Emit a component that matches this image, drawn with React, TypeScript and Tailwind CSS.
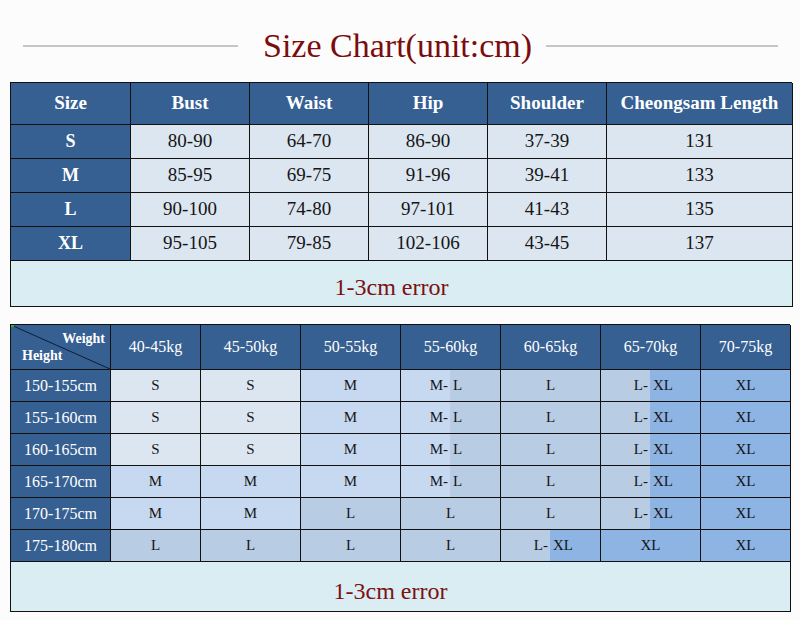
const measures = [
  { size: "S", values: ["80-90", "64-70", "86-90", "37-39", "131"] },
  { size: "M", values: ["85-95", "69-75", "91-96", "39-41", "133"] },
  { size: "L", values: ["90-100", "74-80", "97-101", "41-43", "135"] },
  { size: "XL", values: ["95-105", "79-85", "102-106", "43-45", "137"] },
];

const weights = ["40-45kg", "45-50kg", "50-55kg", "55-60kg", "60-65kg", "65-70kg", "70-75kg"];

const fits = [
  { height: "150-155cm", sizes: ["S", "S", "M", "M-L", "L", "L-XL", "XL"] },
  { height: "155-160cm", sizes: ["S", "S", "M", "M-L", "L", "L-XL", "XL"] },
  { height: "160-165cm", sizes: ["S", "S", "M", "M-L", "L", "L-XL", "XL"] },
  { height: "165-170cm", sizes: ["M", "M", "M", "M-L", "L", "L-XL", "XL"] },
  { height: "170-175cm", sizes: ["M", "M", "L", "L", "L", "L-XL", "XL"] },
  { height: "175-180cm", sizes: ["L", "L", "L", "L", "L-XL", "XL", "XL"] },
];

const tone: Record<string, string> = {
  S: "bg-[#dce6f1]",
  M: "bg-[#c6d9f1]",
  L: "bg-[#b8cce4]",
  XL: "bg-[#8db4e2]",
};

export default function App() {
  return (
    <main className="min-h-screen w-[800px] bg-[#fdfcfd] font-['Liberation_Serif',serif]">
      <div className="flex items-center pl-[23px] pt-[27px]">
        <div className="h-[2px] w-[215px] bg-[#c6c6c6]" />
        <h1 className="ml-[25px] h-[38px] text-[34px] leading-[38px] text-[#7b0c0c]">Size Chart(unit:cm)</h1>
        <div className="ml-[14px] h-[2px] w-[232px] bg-[#c6c6c6]" />
      </div>

      {/* measurements */}
      <div className="ml-[10px] mt-[17px] grid w-[782px] grid-cols-[120px_119px_119px_119px_119px_186px] border-l border-t border-[#111]">
        {["Size", "Bust", "Waist", "Hip", "Shoulder", "Cheongsam Length"].map((label) => (
          <div
            key={label}
            className="flex h-[42px] items-center justify-center border-b border-r border-[#111] bg-[#366092] text-[19px] font-bold text-white"
          >
            {label}
          </div>
        ))}
        {measures.map((row) => (
          <Row key={row.size} size={row.size} values={row.values} />
        ))}
        <div className="col-span-6 flex h-[46px] items-center justify-center border-b border-r border-[#111] bg-[#daedf2] pr-[20px] pt-[6px] text-[24px] text-[#7b1113]">
          1-3cm error
        </div>
      </div>

      {/* height / weight */}
      <div className="ml-[10px] mt-[17px] grid w-[780px] grid-cols-[100px_90px_100px_100px_100px_100px_100px_90px] border-l border-t border-[#111]">
        <div className="relative h-[45px] border-b border-r border-[#111] bg-[#366092] text-[14px] font-bold text-white">
          <svg className="absolute inset-0" width="100%" height="100%" viewBox="0 0 99 44" preserveAspectRatio="none">
            <line x1="0" y1="0" x2="99" y2="44" stroke="#0f1c33" strokeWidth="1" />
            <rect x="0" y="0" width="3" height="2" fill="#3aa845" />
          </svg>
          <span className="absolute right-[5px] top-[3px]">Weight</span>
          <span className="absolute bottom-[3px] left-[11px]">Height</span>
        </div>
        {weights.map((w) => (
          <div
            key={w}
            className="flex h-[45px] items-center justify-center border-b border-r border-[#111] bg-[#366092] text-[16px] text-white"
          >
            {w}
          </div>
        ))}
        {fits.map((row) => (
          <FitRow key={row.height} height={row.height} sizes={row.sizes} />
        ))}
        <div className="col-span-8 flex h-[50px] items-center justify-center border-b border-r border-[#111] bg-[#daedf2] pr-[20px] pt-[9px] text-[24px] text-[#7b1113]">
          1-3cm error
        </div>
      </div>
    </main>
  );
}

function Row({ size, values }: { size: string; values: string[] }) {
  return (
    <>
      <div className="flex h-[34px] items-center justify-center border-b border-r border-[#111] bg-[#366092] text-[18px] font-bold text-white">
        {size}
      </div>
      {values.map((v, i) => (
        <div
          key={i}
          className="flex h-[34px] items-center justify-center border-b border-r border-[#111] bg-[#dce6f1] text-[19px] text-[#151515]"
        >
          {v}
        </div>
      ))}
    </>
  );
}

function FitRow({ height, sizes }: { height: string; sizes: string[] }) {
  return (
    <>
      <div className="flex h-[32px] items-center justify-center border-b border-r border-[#111] bg-[#366092] text-[16px] text-white">
        {height}
      </div>
      {sizes.map((s, i) => {
        const [a, b] = s.split("-");
        if (b) {
          return (
            <div key={i} className="flex h-[32px] border-b border-r border-[#111] text-[15px] text-[#151515]">
              <span className={`flex flex-1 items-center justify-end pr-[2px] ${tone[a]}`}>{a}-</span>
              <span className={`flex flex-1 items-center justify-start pl-[3px] ${tone[b]}`}>{b}</span>
            </div>
          );
        }
        return (
          <div
            key={i}
            className={`flex h-[32px] items-center justify-center border-b border-r border-[#111] text-[15px] text-[#151515] ${tone[s]}`}
          >
            {s}
          </div>
        );
      })}
    </>
  );
}
